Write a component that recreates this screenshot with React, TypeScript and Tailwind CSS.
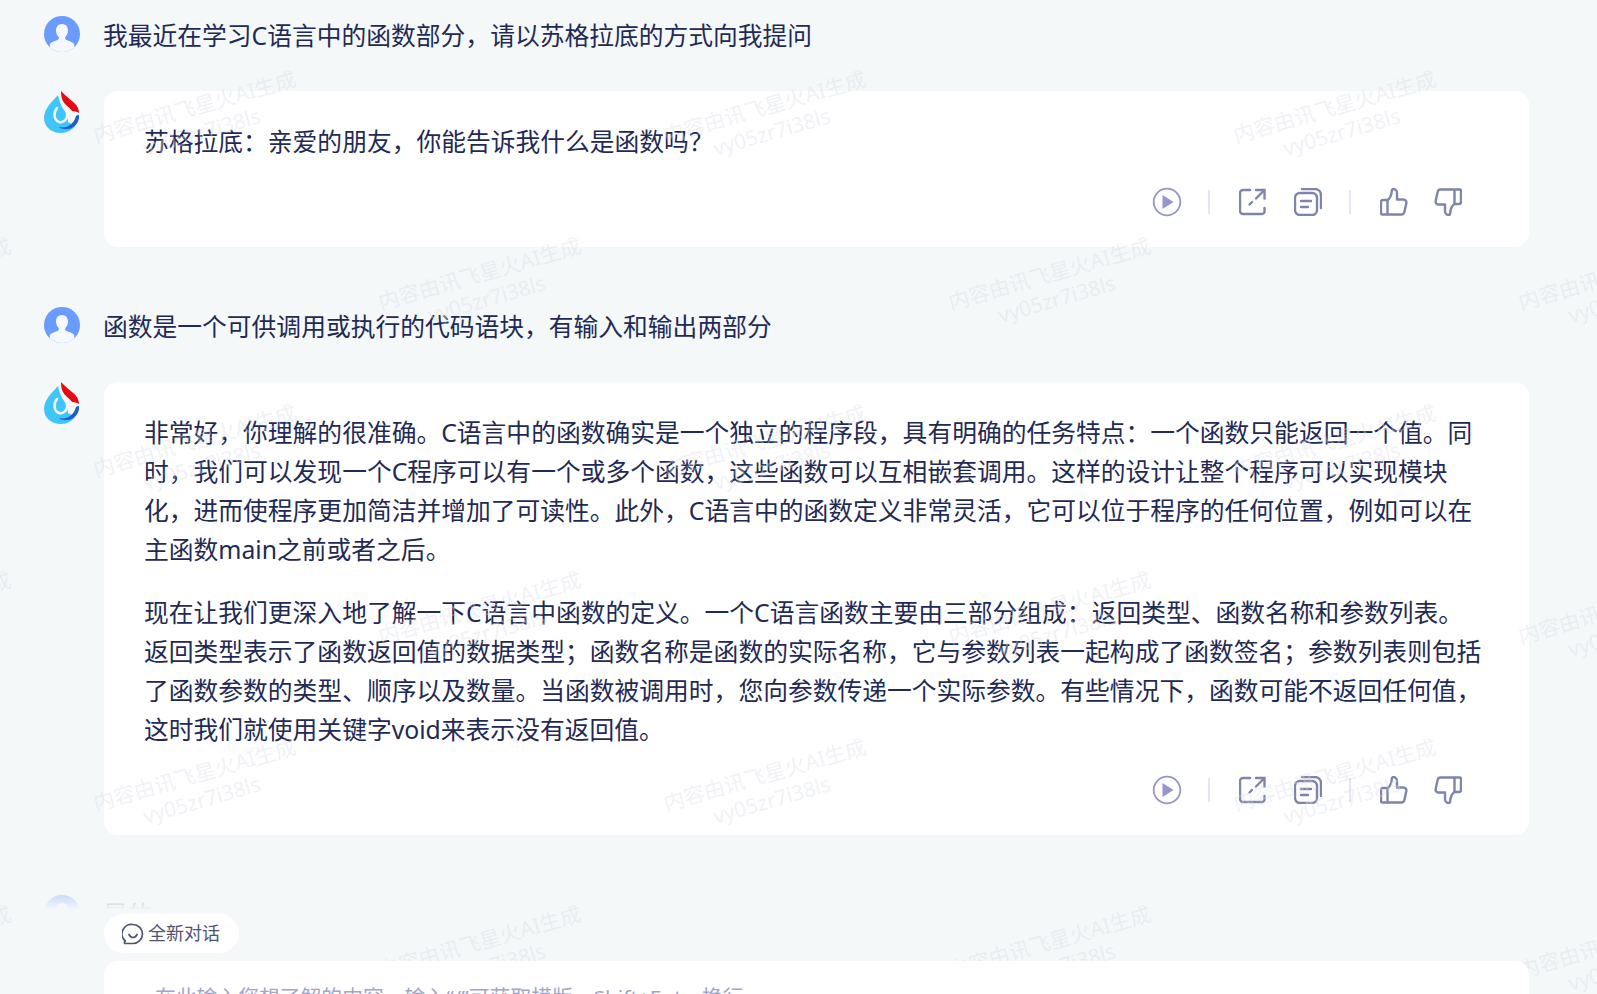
import React from "react";

const FONT = "font-['Noto_Sans','Noto_Sans_CJK_SC',sans-serif]";
const BODY = "text-[24.77px] leading-[39px] text-[#1f2a55]";

function UserAvatar() {
  return (
    <svg width="36" height="36" viewBox="0 0 36 36" className="shrink-0">
      <defs>
        <clipPath id="uac"><circle cx="18" cy="18" r="18" /></clipPath>
      </defs>
      <circle cx="18" cy="18" r="18" fill="#6a9bff" />
      <g clipPath="url(#uac)">
        <path d="M18 8c3.800 0 6 2.800 6 6.500 0 3-1.500 5.500-2.800 6.800v1.500c0 1.500 5.800 2 9 5.200v8H5.800v-8c3.200-3.200 9-3.700 9-5.200v-1.500C13.500 20 12 17.500 12 14.500 12 10.800 14.200 8 18 8z" fill="#f6f8ff" />
      </g>
    </svg>
  );
}

function SparkLogo() {
  return (
    <svg width="36" height="42" viewBox="0 0 36 42" className="shrink-0">
      <path d="M14 4C9 10 0 17 0 27c0 9 8 15 17 15 6 0 11-3 14-7l-7-4c0-4-1-8-4-12-3-4-5-10-6-15z" fill="#3fc5fb" />
      <path d="M13 17c-4 5-3 12 2 14 5 1 9-3 8-9" fill="none" stroke="#f4f8f9" strokeWidth="2.500" strokeLinecap="round" />
      <path d="M17 0c0 6 1 9 4 13 3 3 7 6 7 7 3 0 6 1 7 2 0-5-3-9-7-12-4-3-8-7-11-10z" fill="#e60a12" />
      <path d="M35 24c1 8-6 15-14 14-3 0-5-1-6-2 5 1 9 0 11-2 3-2 5-5 6-9 1-1 2-1 3-1z" fill="#1f5bd0" />
    </svg>
  );
}

function Actions() {
  const s = "#7f85a8";
  return (
    <div className="flex items-center justify-end h-[28px] pr-[23px]">
      <svg width="30" height="30" viewBox="0 0 30 30" className="mr-[26px]">
        <circle cx="15" cy="15" r="13.300" fill="none" stroke="#9397c9" strokeWidth="1.800" />
        <path d="M10.500 8v14l11-7z" fill="#9397c9" />
      </svg>
      <div className="w-[2px] h-[24px] bg-[#e4e6f2] mr-[29px]" />
      <svg width="28" height="28" viewBox="0 0 28 28" fill="none" stroke={s} strokeWidth="2.400" strokeLinecap="round" className="mr-[27px]">
        <path d="M11 2H4a3 3 0 0 0-3 3v18a3 3 0 0 0 3 3h19a2.500 2.500 0 0 0 2.500-2.500V20" />
        <path d="M17 2h8.500v8.500" />
        <path d="M25 2.500 17 10.500M13 14l-2.500 2.500" />
      </svg>
      <svg width="28" height="28" viewBox="0 0 28 28" fill="none" stroke={s} strokeWidth="2.400" strokeLinecap="round" className="mr-[27px]">
        <rect x="1" y="5" width="22" height="22" rx="5" />
        <path d="M8 1h13a6 6 0 0 1 6 6v13" />
        <path d="M7 13h10M7 19h7" />
      </svg>
      <div className="w-[2px] h-[24px] bg-[#e4e6f2] mr-[29px]" />
      <svg width="28" height="28" viewBox="0 0 28 28" fill="none" stroke={s} strokeWidth="2.400" strokeLinejoin="round" className="mr-[26px]">
        <path d="M7.500 12H3a2 2 0 0 0-2 2v11a1.500 1.500 0 0 0 1.500 1.500h19a3 3 0 0 0 2.800-2.300l2-9c.5-2-1-3.700-3-3.700H17V5c0-2.500-2-4-3.600-4C12 1 11.700 2 11.700 3.500 11.700 7 9.500 11 7.500 12z" />
        <path d="M7.500 12v14.500" />
      </svg>
      <svg width="28" height="28" viewBox="0 0 28 28" fill="none" stroke={s} strokeWidth="2.400" strokeLinejoin="round">
        <path d="M20.500 16H25a2 2 0 0 0 2-2V3a1.500 1.500 0 0 0-1.500-1.500h-19a3 3 0 0 0-2.800 2.300l-2 9c-.5 2 1 3.700 3 3.700H11V23c0 2.500 2 4 3.600 4 1.400 0 1.700-1 1.700-2.500 0-3.500 2.200-7.500 4.200-8.500z" />
        <path d="M20.500 16V1.500" />
      </svg>
    </div>
  );
}

function UserRow({ text, className }: { text: string; className: string }) {
  return (
    <div className={"flex items-start ml-[44px] " + className}>
      <UserAvatar />
      <p className={"ml-[23px] mr-[68px] " + BODY}>{text}</p>
    </div>
  );
}

function BotRow({ children, className }: { children: React.ReactNode; className: string }) {
  return (
    <div className={"flex items-start ml-[44px] mr-[68px] " + className}>
      <SparkLogo />
      <div className="ml-[24px] flex-1 bg-white rounded-[14px] pl-[40px] pr-[44px]">{children}</div>
    </div>
  );
}

const MARKS: [number, number][] = [];
for (const y of [123, 457, 791]) for (const x of [90, 660, 1230]) MARKS.push([x, y]);
for (const y of [290, 624, 958]) for (const x of [-195, 375, 945, 1515]) MARKS.push([x, y]);

function Watermarks() {
  return (
    <div className="absolute inset-0 overflow-hidden pointer-events-none z-30">
      {MARKS.map(([x, y]) => (
        <div
          key={x + "-" + y}
          className="absolute w-[210px] text-center text-[21px] leading-[26px] whitespace-nowrap text-[#d9dde8]/40 -rotate-[16deg] origin-top-left"
          style={{ left: x, top: y }}
        >
          <div>内容由讯飞星火AI生成</div>
          <div>vy05zr7i38ls</div>
        </div>
      ))}
    </div>
  );
}

export default function App() {
  return (
    <div className={"relative w-[1597px] h-[994px] overflow-hidden bg-[#f4f8f9] " + FONT}>
      <div className="pt-[16px]">
        <UserRow className="" text="我最近在学习C语言中的函数部分，请以苏格拉底的方式向我提问" />
        <BotRow className="mt-[36px]">
          <p className={"pt-[31px] " + BODY}>苏格拉底：亲爱的朋友，你能告诉我什么是函数吗？</p>
          <div className="pt-[27px] pb-[31px]"><Actions /></div>
        </BotRow>
        <UserRow className="mt-[60px]" text="函数是一个可供调用或执行的代码语块，有输入和输出两部分" />
        <BotRow className="mt-[36px]">
          <div className={"pt-[31px] " + BODY}>
            <p>非常好，你理解的很准确。C语言中的函数确实是一个独立的程序段，具有明确的任务特点：一个函数只能返回一个值。同时，我们可以发现一个C程序可以有一个或多个函数，这些函数可以互相嵌套调用。这样的设计让整个程序可以实现模块化，进而使程序更加简洁并增加了可读性。此外，C语言中的函数定义非常灵活，它可以位于程序的任何位置，例如可以在主函数main之前或者之后。</p>
            <p className="mt-[24px]">现在让我们更深入地了解一下C语言中函数的定义。一个C语言函数主要由三部分组成：返回类型、函数名称和参数列表。返回类型表示了函数返回值的数据类型；函数名称是函数的实际名称，它与参数列表一起构成了函数签名；参数列表则包括了函数参数的类型、顺序以及数量。当函数被调用时，您向参数传递一个实际参数。有些情况下，函数可能不返回任何值，这时我们就使用关键字void来表示没有返回值。</p>
          </div>
          <div className="pt-[27px] pb-[31px]"><Actions /></div>
        </BotRow>
        <UserRow className="mt-[60px]" text="是的" />
      </div>

      <div className="absolute left-0 right-0 bottom-0 h-[134px] flex flex-col">
        <div className="h-[50px] shrink-0 bg-gradient-to-b from-[#f4f8f9]/0 to-[#f4f8f9]" />
        <div className="flex-1 min-h-0 flex flex-col bg-[#f4f8f9]">
          <div className="ml-[104px] mt-[4px] h-[39px] shrink-0 w-[135px] rounded-[20px] bg-white flex items-center pl-[18px] text-[18px] text-[#4e5375]">
            <svg width="22" height="22" viewBox="0 0 22 22" fill="none" stroke="#4e5375" strokeWidth="1.700" strokeLinecap="round" className="mr-[4px]">
              <path d="M11 1.500a9.500 9.500 0 0 1 0 19H3.500c-1 0-1.300-.8-.9-1.500l.6-1A9.500 9.500 0 0 1 11 1.500z" />
              <path d="M7 11.500c1 2 2.500 3 4 3s3-1 4-3" />
            </svg>
            全新对话
          </div>
          <div className="relative z-40 ml-[104px] mr-[68px] mt-[8px] flex-1 min-h-0 overflow-hidden bg-white rounded-t-[14px] pl-[51px] pt-[21px] text-[20.8px] leading-[30px] text-[#a2a6c8] whitespace-nowrap">
            在此输入您想了解的内容，输入“/”可获取模版，Shift+Enter换行
          </div>
        </div>
      </div>
      <Watermarks />
    </div>
  );
}
